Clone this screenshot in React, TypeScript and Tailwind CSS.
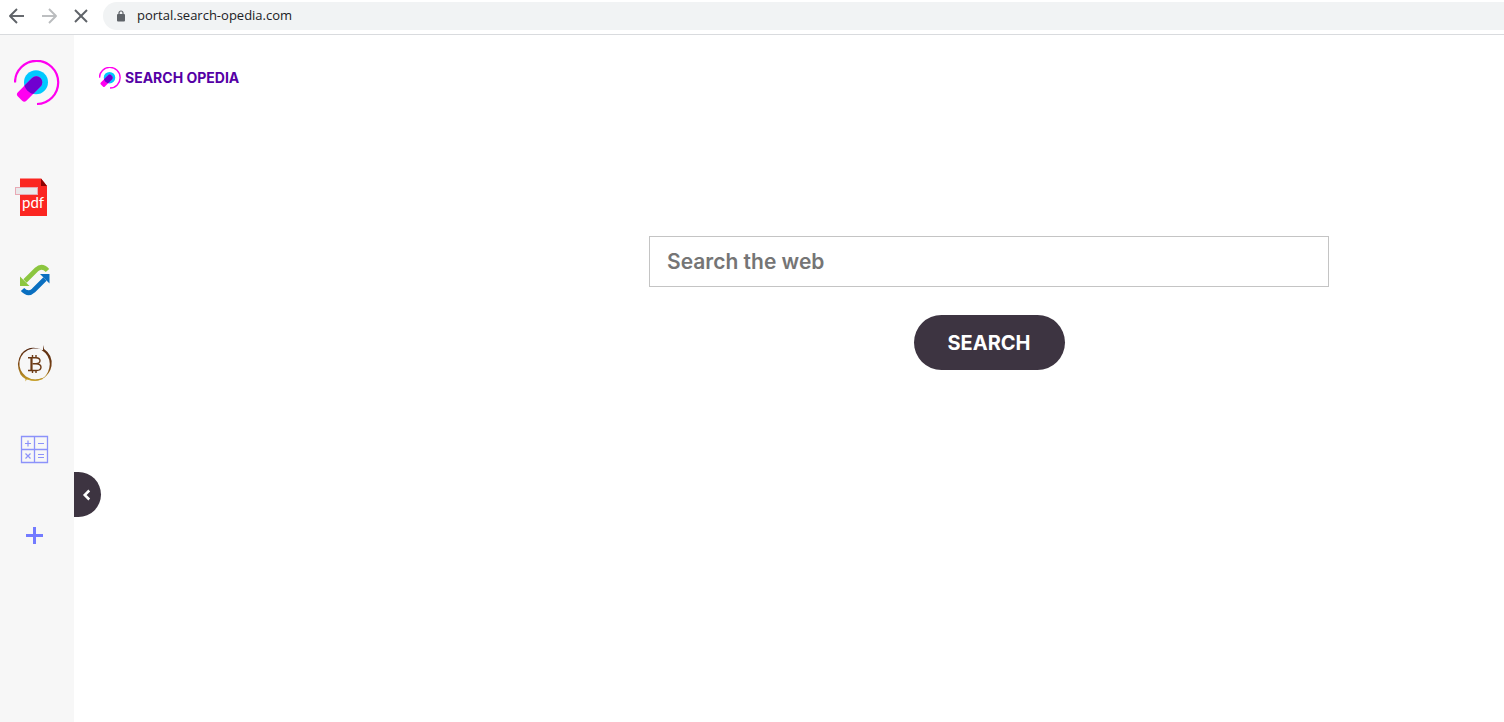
import { ArrowLeft, ArrowRight, ChevronLeft, X } from 'lucide-react';
import { useId, useState } from 'react';

interface LogoProps {
  className?: string;
  ringWidth?: number;
}

const Logo = ({ className, ringWidth = 2.2 }: LogoProps) => {
  const clipId = useId();
  const handle = 'M-6 0A6 6 0 0 1 6 0V20A3 3 0 0 1 3 23H-3A3 3 0 0 1 -6 20Z';

  return (
    <svg viewBox="0 0 46 46" className={className} aria-hidden="true">
      <defs>
        <clipPath id={clipId}>
          <circle cx="22" cy="22.3" r="12" />
        </clipPath>
      </defs>
      <path d="M1 22.5A21.6 21.6 0 1 1 23 44" fill="none" stroke="#ff00f0" strokeWidth={ringWidth} />
      <circle cx="22" cy="22.3" r="12" fill="#00c8ff" />
      <path d={handle} transform="translate(22.3 22.3) rotate(45)" fill="#ff00f0" />
      <g clipPath={`url(#${clipId})`}>
        <path d={handle} transform="translate(22.3 22.3) rotate(45)" fill="#7000d0" />
      </g>
    </svg>
  );
};

const PdfIcon = () => (
  <svg viewBox="0 0 40 44" className="w-10 h-11" aria-hidden="true">
    <path d="M5 5.5H26L32 13V43H5Z" fill="#fb2621" />
    <path d="M26 5.5L32 13H26Z" fill="#8c0303" />
    <rect x="0.5" y="14.5" width="22" height="7" fill="#e8e8ea" stroke="#e9a9b4" />
    <text x="7" y="35" fill="#fff" fontSize="15" className="font-['Lato',sans-serif] font-normal">pdf</text>
  </svg>
);

const ConvertIcon = () => (
  <svg viewBox="0 0 40 44" className="w-10 h-11" aria-hidden="true">
    <path d="M10 23L21.5 11.5Q27 6.5 32.5 12.5" fill="none" stroke="#8cc63f" strokeWidth="4.6" />
    <path d="M5 18.5V28H14.5Z" fill="#8cc63f" />
    <path d="M30 21L18.5 32.5Q13 37.5 7.5 31.5" fill="none" stroke="#0a6fc0" strokeWidth="4.6" />
    <path d="M25 16H34.5V25.5Z" fill="#0a6fc0" />
  </svg>
);

const BitcoinIcon = () => (
  <svg viewBox="0 0 40 44" className="w-10 h-11" aria-hidden="true">
    <defs>
      <linearGradient id="coin" x1="0.6" y1="0" x2="0.3" y2="1">
        <stop offset="0" stopColor="#4f2410" />
        <stop offset="0.55" stopColor="#7a4313" />
        <stop offset="1" stopColor="#c9a227" />
      </linearGradient>
    </defs>
    <path
      d="M27 6.5Q14 1.500 6.500 10.500Q0 20 5.500 31.500Q7.500 34.500 10.500 36V38.500L12 36Q22 40.500 31 33.500L27.500 35Q18.500 38.500 11 33.500Q3.500 27.500 4.500 18.500Q7 7.500 18 5.500Q23 5 27 6.500Z"
      fill="url(#coin)"
    />
    <path d="M28 2L29 6Q38 12 36.500 23Q35 31 28 35.500Q34.500 29.500 34.800 21Q34.500 12 26.500 7L28 7Z" fill="url(#coin)" />
    <path d="M12 36Q20 39 28 35.500" fill="none" stroke="#c9a227" strokeWidth="1" />
    <g fill="none" stroke="#6b3914">
      <path d="M13 14.800H21Q25 15 25 17.800Q24.800 20.500 21 20.800H17.500M21 20.800Q26 21 26 24.300Q25.800 27.500 21.500 27.500H13" strokeWidth="1.4" />
      <path d="M16.500 14.500V27.500" strokeWidth="2.2" />
      <path d="M17.500 12V14.500M21 12V14.500M17.500 27.500V30M21 27.500V30" strokeWidth="1.4" />
    </g>
  </svg>
);

const CalculatorIcon = () => (
  <svg viewBox="0 0 40 44" className="w-10 h-11" fill="none" stroke="#8c92fa" aria-hidden="true">
    <path d="M6.5 8.5H32.5V34.5H6.5ZM19.5 8.5V34.5M6.5 21.5H32.5" strokeWidth="1.3" />
    <path d="M10 15.5H16M13 12.5V18.5M23 15.5H29M10.5 25.5L15.5 30.5M15.5 25.5L10.5 30.5M23 26.5H29M23 29.5H29" strokeWidth="1.2" />
  </svg>
);

const PlusIcon = () => (
  <svg viewBox="0 0 40 44" className="w-10 h-11" aria-hidden="true">
    <path d="M11 22.5H28M19.5 14V31" stroke="#737bff" strokeWidth="3" />
  </svg>
);

const shortcuts = [
  { label: 'PDF tools', Icon: PdfIcon },
  { label: 'Converter', Icon: ConvertIcon },
  { label: 'Crypto', Icon: BitcoinIcon },
  { label: 'Calculator', Icon: CalculatorIcon },
];

const BrowserBar = () => (
  <header className="flex items-start h-[35px] border-b border-[#d9dbde] bg-white">
    <div className="flex items-center h-8 pl-[5px] gap-2 text-[#5f6368]">
      <button type="button" aria-label="Back">
        <ArrowLeft size={24} strokeWidth={1.9} strokeLinecap="butt" />
      </button>
      <button type="button" aria-label="Forward" className="text-[#babcbe]">
        <ArrowRight size={24} strokeWidth={1.9} strokeLinecap="butt" />
      </button>
      <button type="button" aria-label="Stop loading">
        <X size={24} strokeWidth={1.9} strokeLinecap="butt" />
      </button>
    </div>
    <div className="flex flex-1 items-center h-7 mt-0.5 ml-2.5 pl-3.5 gap-3 rounded-l-full bg-[#f1f3f4]">
      <svg viewBox="0 0 8 12" className="w-2 h-3" aria-hidden="true">
        <rect y="4" width="8" height="7.5" rx="1" fill="#5f6368" />
        <path d="M2 4.5V3A2 2 0 0 1 6 3V4.5" fill="none" stroke="#5f6368" strokeWidth="1.2" />
      </svg>
      <input
        type="text"
        aria-label="Address"
        defaultValue="portal.search-opedia.com"
        className="flex-1 bg-transparent outline-none font-['Open_Sans',sans-serif] text-[13px] text-[#202124]"
      />
    </div>
  </header>
);

const Sidebar = () => (
  <aside className="w-[74px] shrink-0 pt-[25px] bg-[#f7f7f7]">
    <a href="#" aria-label="Home" className="block ml-3.5">
      <Logo className="size-[46px]" />
    </a>
    <nav className="flex flex-col items-start mt-[67px] ml-[15px] gap-[41px]">
      {shortcuts.map(({ label, Icon }) => (
        <a key={label} href="#" aria-label={label}>
          <Icon />
        </a>
      ))}
      <button type="button" aria-label="Add shortcut">
        <PlusIcon />
      </button>
    </nav>
  </aside>
);

export default function App() {
  const [query, setQuery] = useState('');
  const [sidebarOpen, setSidebarOpen] = useState(true);

  return (
    <div className="flex flex-col min-h-screen bg-white font-['Inter',sans-serif]">
      <BrowserBar />
      <div className="flex flex-1">
        {sidebarOpen && <Sidebar />}
        <main className="relative flex flex-1">
          <div className="w-[400px] shrink-0 pt-8 pl-[25px]">
            <a href="#" className="inline-flex items-center gap-1 h-[22px] text-sm font-bold text-[#5500a5]">
              <Logo className="size-[22px]" ringWidth={3} />
              SEARCH OPEDIA
            </a>
          </div>
          <form
            className="flex flex-col flex-1 items-center pt-[201px] gap-7"
            onSubmit={e => e.preventDefault()}
          >
            <input
              type="text"
              aria-label="Search the web"
              placeholder="Search the web"
              value={query}
              onChange={e => setQuery(e.target.value)}
              className="w-full max-w-[680px] h-[51px] px-[17px] border border-[#c4c4c4] outline-none text-[21px] font-semibold text-[#333] placeholder:text-[#757575]"
            />
            <button
              type="submit"
              className="h-[55px] w-[151px] rounded-full bg-[#3d3441] text-xl font-bold text-white"
            >
              SEARCH
            </button>
          </form>
          <button
            type="button"
            aria-label="Toggle sidebar"
            onClick={() => setSidebarOpen(!sidebarOpen)}
            className="absolute left-0 top-[437px] flex items-center justify-center w-[27px] h-[45px] pr-0.5 rounded-r-full bg-[#3d3441] text-white"
          >
            <ChevronLeft size={18} strokeWidth={3.4} strokeLinecap="butt" strokeLinejoin="miter" />
          </button>
        </main>
      </div>
    </div>
  );
}
